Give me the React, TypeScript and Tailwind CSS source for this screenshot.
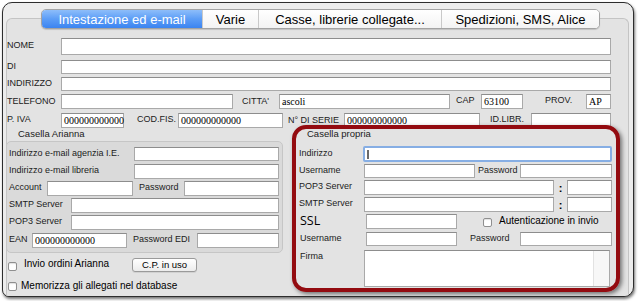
import React from 'react';
import clsx from 'clsx';

const Label = ({ children, className }: { children: React.ReactNode; className?: string }) => (
  <div className={clsx('shrink-0 whitespace-nowrap text-[9px] leading-[10px] text-[#1b1b1b] pt-[1px]', className)}>
    {children}
  </div>
);

const Input = ({ className, value }: { className?: string; value?: string }) => (
  <div
    className={clsx(
      "shrink-0 flex items-center bg-white border border-[#a9a9a9] border-t-[#8d8d8d] pl-[2px] pt-[1px] font-['Liberation_Serif',serif] text-[10px] leading-none text-black",
      className
    )}
  >
    {value}
  </div>
);

const Checkbox = ({ className }: { className?: string }) => (
  <div className={clsx('shrink-0 w-[9px] h-[9px] rounded-[2px] border border-[#8f8f8f] bg-white shadow-[inset_0_1px_1px_rgba(0,0,0,0.12)]', className)} />
);

export default function App() {
  return (
    <div className="w-[642px] h-[301px] overflow-hidden bg-white pt-[2px] pl-[2px] font-['Liberation_Sans',Arial,sans-serif] text-black">
      <div className="w-[632px] h-[295px] flex flex-col overflow-hidden rounded-[10px] rounded-bl-[7px] border border-[#2d2d2d] bg-[#ececec] shadow-[1px_2px_3px_rgba(0,0,0,0.55)]">
        {/* Tabs */}
        <div className="relative z-10 mt-[6px] ml-[38px] flex h-[20px] w-[559px] overflow-hidden rounded-[5px] border border-[#a3a3a3] bg-white text-[13px] leading-none shadow-[0_1px_1px_rgba(0,0,0,0.15)]">
          <div className="w-[160px] flex items-center justify-center bg-gradient-to-b from-[#8dbdfa] via-[#5c9df6] to-[#3b84f1] text-white">
            Intestazione ed e-mail
          </div>
          <div className="w-[56px] flex items-center justify-center border-l border-[#c9c9c9] bg-gradient-to-b from-white to-[#f3f3f3]">
            Varie
          </div>
          <div className="w-[183px] flex items-center justify-center border-l border-[#c9c9c9] bg-gradient-to-b from-white to-[#f3f3f3]">
            Casse, librerie collegate...
          </div>
          <div className="w-[158px] flex items-center justify-center border-l border-[#c9c9c9] bg-gradient-to-b from-white to-[#f3f3f3]">
            Spedizioni, SMS, Alice
          </div>
        </div>

        {/* Panel */}
        <div className="-mt-[11px] ml-[3px] w-[623px] flex-1 flex flex-col rounded-t-[6px] border-t border-l border-r border-[#c4c4c4] bg-[#e3e3e3]">
          <div className="mt-[19px] flex items-start">
            <Label className="w-[54px] pt-[2px]">NOME</Label>
            <Input className="w-[550px] h-[17px]" />
          </div>
          <div className="mt-[5px] flex items-start">
            <Label className="w-[54px]">DI</Label>
            <Input className="w-[550px] h-[14px]" />
          </div>
          <div className="mt-[3px] flex items-start">
            <Label className="w-[54px]">INDIRIZZO</Label>
            <Input className="w-[550px] h-[14px]" />
          </div>
          <div className="mt-[3px] flex items-start">
            <Label className="w-[54px] pt-[2px]">TELEFONO</Label>
            <Input className="w-[172px] h-[15px]" />
            <Label className="ml-[9px] w-[37px] pt-[2px]">CITTA'</Label>
            <Input className="w-[171px] h-[15px]" value="ascoli" />
            <Label className="ml-[6px] w-[25px] pt-[1px]">CAP</Label>
            <Input className="w-[42px] h-[15px]" value="63100" />
            <Label className="ml-[22px] w-[41px] pt-[1px]">PROV.</Label>
            <Input className="w-[25px] h-[15px]" value="AP" />
          </div>
          <div className="mt-[4px] flex items-start">
            <Label className="w-[54px]">P. IVA</Label>
            <Input className="w-[63px] h-[15px]" value="000000000000" />
            <Label className="ml-[13px] w-[41px] pt-0">COD.FIS.</Label>
            <Input className="w-[105px] h-[15px]" value="000000000000" />
            <Label className="ml-[5px] w-[56px] pt-[2px]">N° DI SERIE</Label>
            <Input className="w-[136px] h-[15px]" value="000000000000" />
            <Label className="ml-[10px] w-[41px] pt-0">ID.LIBR.</Label>
            <Input className="w-[80px] h-[15px]" />
          </div>

          {/* Bottom section */}
          <div className="-mt-[3px] flex items-start">
            {/* Casella Arianna */}
            <div className="w-[276px] pt-[4px] flex flex-col">
              <div className="ml-[11px] h-[10px] text-[9.5px] leading-[10px] text-[#1b1b1b]">Casella Arianna</div>
              <div className="mt-[2px] -ml-[1px] w-[277px] h-[112px] flex flex-col rounded-[5px] border border-[#c6c6c6] bg-[#dadada] pl-[2px]">
                <div className="mt-[5px] flex items-start">
                  <Label className="w-[125px]">Indirizzo e-mail agenzia I.E.</Label>
                  <Input className="w-[145px] h-[14px]" />
                </div>
                <div className="mt-[3px] flex items-start">
                  <Label className="w-[125px]">Indirizzo e-mail libreria</Label>
                  <Input className="w-[145px] h-[15px]" />
                </div>
                <div className="mt-[2px] flex items-start">
                  <Label className="w-[38px]">Account</Label>
                  <Input className="w-[86px] h-[15px]" />
                  <Label className="ml-[6px] w-[45px]">Password</Label>
                  <Input className="w-[95px] h-[15px]" />
                </div>
                <div className="mt-[2px] flex items-start">
                  <Label className="w-[62px]">SMTP Server</Label>
                  <Input className="w-[208px] h-[15px]" />
                </div>
                <div className="mt-[2px] flex items-start">
                  <Label className="w-[62px]">POP3 Server</Label>
                  <Input className="w-[208px] h-[15px]" />
                </div>
                <div className="mt-[3px] flex items-start">
                  <Label className="w-[23px]">EAN</Label>
                  <Input className="w-[95px] h-[15px]" value="000000000000" />
                  <Label className="ml-[6px] w-[64px]">Password EDI</Label>
                  <Input className="w-[82px] h-[15px]" />
                </div>
              </div>
              <div className="mt-[5px] flex items-start h-[14px]">
                <Checkbox className="ml-[1px] mt-[4px]" />
                <div className="ml-[7px] mt-[1px] w-[108px] text-[10px] leading-[10px] whitespace-nowrap">Invio ordini Arianna</div>
                <div className="w-[65px] h-[14px] flex items-center justify-center rounded-[3px] border border-[#9a9a9a] bg-gradient-to-b from-white to-[#ececec] text-[9.5px] leading-none shadow-[0_1px_0_rgba(0,0,0,0.08)]">
                  C.P. in uso
                </div>
              </div>
              <div className="mt-[10px] flex items-start">
                <Checkbox className="ml-[1px]" />
                <div className="ml-[4px] -mt-[1px] text-[10px] leading-[10px] whitespace-nowrap">Memorizza gli allegati nel database</div>
              </div>
            </div>

            {/* Casella propria (highlighted) */}
            <div className="ml-[9px] w-[328px] h-[167px] flex flex-col rounded-[14px] border-[4px] border-[#930b10] pl-[3px] shadow-[2px_2px_4px_rgba(0,0,0,0.5)]">
              <div className="ml-[8px] h-[10px] text-[9.5px] leading-[10px] text-[#1b1b1b]">Casella propria</div>
              <div className="mt-[7px] flex items-start">
                <Label className="w-[64px] pt-[2px]">Indirizzo</Label>
                <div className="w-[249px] h-[16px] rounded-[2px] border-2 border-[#86aee4] bg-white flex items-center pl-[2px]">
                  <div className="w-[2px] h-[9px] bg-[#6a6a6a]" />
                </div>
              </div>
              <div className="mt-[2px] flex items-start">
                <Label className="w-[65px]">Username</Label>
                <Input className="w-[111px] h-[14px]" />
                <Label className="ml-[3px] w-[42px]">Password</Label>
                <Input className="w-[92px] h-[14px]" />
              </div>
              <div className="mt-[2px] flex items-start">
                <Label className="w-[65px]">POP3 Server</Label>
                <Input className="w-[190px] h-[15px]" />
                <div className="w-[13px] pt-[2px] text-center text-[11px] font-bold leading-[12px]">:</div>
                <Input className="w-[45px] h-[15px]" />
              </div>
              <div className="mt-[2px] flex items-start">
                <Label className="w-[65px]">SMTP Server</Label>
                <Input className="w-[190px] h-[15px]" />
                <div className="w-[13px] pt-[2px] text-center text-[11px] font-bold leading-[12px]">:</div>
                <Input className="w-[45px] h-[15px]" />
              </div>
              <div className="mt-[2px] flex items-start">
                <div className="w-[67px] pl-[1px] font-['Open_Sans',sans-serif] text-[12.5px] leading-[14px]">SSL</div>
                <Input className="w-[91px] h-[15px]" />
                <Checkbox className="ml-[26px] mt-[4px]" />
                <div className="ml-[7px] pt-[2px] text-[10px] leading-[10px] whitespace-nowrap">Autenticazione in invio</div>
              </div>
              <div className="mt-[3px] flex items-start">
                <Label className="w-[67px] pl-[1px]">Username</Label>
                <Input className="w-[91px] h-[14px]" />
                <Label className="ml-[13px] w-[50px]">Password</Label>
                <Input className="w-[92px] h-[14px]" />
              </div>
              <div className="mt-[4px] flex items-start">
                <Label className="w-[65px] pl-[1px]">Firma</Label>
                <div className="w-[246px] h-[37px] flex justify-end border border-[#a9a9a9] border-t-[#8d8d8d] bg-white">
                  <div className="w-[16px] h-full border-l border-[#e2e2e2] bg-[#f7f7f7]" />
                </div>
              </div>
            </div>
          </div>
        </div>
      </div>
    </div>
  );
}
